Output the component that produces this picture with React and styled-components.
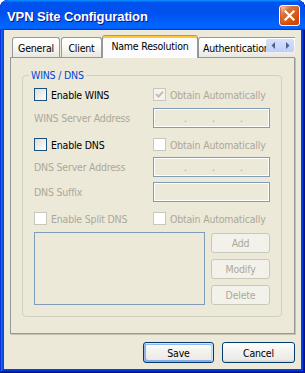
import React from "react";
import styled, { createGlobalStyle } from "styled-components";

const UI = `"DejaVu Sans Condensed", "Liberation Sans", sans-serif`;

const Global = createGlobalStyle`
  html, body { margin: 0; padding: 0; background: #ffffff; }
  * { box-sizing: border-box; }
`;

const Window = styled.div`
  width: 305px;
  height: 373px;
  display: flex;
  flex-direction: column;
  background: #0842dd;
  border-radius: 8px 8px 0 0;
  overflow: hidden;
  box-shadow: inset -1px -1px #00138c, inset 1px 1px #0831d9,
    inset -2px -2px #001ea0, inset 2px 2px #166aee,
    inset -3px -3px #003bda, inset 3px 3px #0855dd;
  font-family: ${UI};
  font-size: 10.5px;
  letter-spacing: -0.2px;
`;

const TitleBar = styled.div`
  height: 30px;
  flex-shrink: 0;
  display: flex;
  align-items: center;
  justify-content: space-between;
  padding: 0 5px 0 7px;
  border-radius: 8px 8px 0 0;
  background: linear-gradient(
    180deg,
    #0997ff,
    #0053ee 8%,
    #0050ee 40%,
    #0066ff 88%,
    #0066ff 93%,
    #005bff 95%,
    #003dd7 96%,
    #003dd7
  );
`;

const Title = styled.span`
  margin-top: 2px;
  color: #ffffff;
  font: bold 13px "Liberation Sans", Arial, sans-serif;
  text-shadow: 1px 1px #0f1089;
  letter-spacing: -0.1px;
`;

const CloseButton = styled.div`
  width: 21px;
  height: 21px;
  border: 1px solid #ffffff;
  border-radius: 3px;
  display: flex;
  align-items: center;
  justify-content: center;
  background: radial-gradient(
    circle at 90% 90%,
    #cc4600 0%,
    #dc6527 55%,
    #cd7546 68%,
    #ffccb2 90%,
    #ffffff 100%
  );
  box-shadow: inset 0 -1px 2px 1px #da4600;
`;

const Client = styled.div`
  flex: 1;
  margin: 0 4px 4px;
  background: #ece9d8;
  display: flex;
  flex-direction: column;
  padding: 5px 6px 6px;
`;

const TabStrip = styled.div`
  position: relative;
  z-index: 1;
  height: 23px;
  margin-bottom: -1px;
  display: flex;
  align-items: flex-end;
  padding-left: 2px;
  overflow: hidden;
`;

const Tab = styled.div`
  flex-shrink: 0;
  width: ${(p) => p.$w}px;
  height: ${(p) => (p.$active ? 23 : 20)}px;
  margin: 0 ${(p) => (p.$active ? 0 : 1)}px ${(p) => (p.$active ? 0 : 1)}px
    ${(p) => (p.$active ? -1 : 0)}px;
  border: 1px solid #919b9c;
  border-bottom: none;
  border-top-color: ${(p) => (p.$active ? "#e68b2c" : "#919b9c")};
  border-radius: 3px 3px 0 0;
  background: ${(p) =>
    p.$active
      ? "#fcfcfe"
      : "linear-gradient(180deg, #ffffff, #fcfcfb 35%, #f0efea 75%, #e7e6e0)"};
  box-shadow: ${(p) => (p.$active ? "inset 0 2px #ffc73c" : "none")};
  display: flex;
  align-items: center;
  justify-content: ${(p) => (p.$left ? "flex-start" : "center")};
  padding: ${(p) => (p.$active ? "0 0 2px" : p.$left ? "0 0 0 4px" : "0")};
  color: #000000;
  white-space: nowrap;
`;

const TabScroller = styled.div`
  position: absolute;
  right: 1px;
  top: 4px;
  width: 28px;
  height: 13px;
  display: flex;
  background: linear-gradient(180deg, #d6e1fd, #bccefa);
  border-radius: 2px;
`;

const ScrollHalf = styled.div`
  flex: 1;
  display: flex;
  align-items: center;
  justify-content: center;
`;

const Panel = styled.div`
  flex: 1;
  border: 1px solid #919b9c;
  background: #ece9d8;
  box-shadow: 1px 1px 0 #c5c2b2;
  padding: 10px 12px 0 11px;
  display: flex;
  flex-direction: column;
`;

const Group = styled.fieldset`
  margin: 0;
  border: 1px solid #d0d0bf;
  border-radius: 4px;
  padding: 0 11px 11px 11px;
  min-width: 0;
`;

const Legend = styled.legend`
  margin-left: -5px;
  padding: 0 2px;
  line-height: 14px;
  color: #0046d5;
`;

const Row = styled.div`
  display: flex;
  align-items: ${(p) => (p.$top ? "flex-start" : "center")};
  height: ${(p) => p.$h}px;
  margin-top: ${(p) => p.$mt}px;
`;

const LeftCell = styled.div`
  width: 119px;
  flex-shrink: 0;
  display: flex;
  align-items: center;
  color: ${(p) => (p.$disabled ? "#aca899" : "#000000")};
  white-space: nowrap;
`;

const RightCell = styled.div`
  width: 117px;
  display: flex;
  align-items: center;
  color: #aca899;
  white-space: nowrap;
`;

const Box = styled.span`
  width: 13px;
  height: 13px;
  flex-shrink: 0;
  margin-right: 4px;
  border: 1px solid ${(p) => (p.$disabled ? "#cac8bb" : "#1c5180")};
  background: ${(p) =>
    p.$disabled
      ? p.$checked
        ? "#f4f3ee"
        : "#ffffff"
      : "linear-gradient(135deg, #dcdcd7, #ffffff)"};
  display: flex;
  align-items: center;
  justify-content: center;
`;

const Field = styled.div`
  width: 117px;
  height: 20px;
  border: 1px solid #7f9db9;
  background: #ece9d8;
  box-shadow: inset 0 0 0 1px #ffffff;
  display: flex;
  align-items: center;
  padding-left: 1px;
  color: #aca899;
`;

const Segment = styled.span`
  width: ${(p) => p.$w}px;
  flex-shrink: 0;
`;

const Dot = styled.span`
  width: 3px;
  text-align: center;
  flex-shrink: 0;
`;

const ListBox = styled.div`
  width: 171px;
  height: 73px;
  flex-shrink: 0;
  border: 1px solid #7f9db9;
  background: #ece9d8;
`;

const SideButtons = styled.div`
  display: flex;
  flex-direction: column;
  gap: 6px;
  margin-left: 6px;
  padding-top: 1px;
`;

const SideButton = styled.div`
  width: 59px;
  height: 20px;
  border: 1px solid #c9c7ba;
  border-radius: 3px;
  background: #f3f2ea;
  color: #aca899;
  display: flex;
  align-items: center;
  justify-content: center;
`;

const Footer = styled.div`
  display: flex;
  justify-content: flex-end;
  gap: 8px;
  margin-top: 8px;
`;

const PushButton = styled.button`
  width: ${(p) => p.$w}px;
  height: 21px;
  padding: 0;
  font: 10.5px ${UI};
  letter-spacing: -0.2px;
  color: #000000;
  border: 1px solid #003c74;
  border-radius: 3px;
  background: linear-gradient(180deg, #ffffff, #f3f3ef 40%, #ecebe6 86%, #d6d0c5);
  box-shadow: ${(p) =>
    p.$default
      ? "inset -1px 1px #cee7ff, inset 1px 2px #98b8ea, inset -2px 2px #bcd4f6, inset 1px -1px #89ade4, inset 2px -2px #89ade4"
      : "none"};
`;

const Check = ({ color }) => (
  <svg width="9" height="9" viewBox="0 0 9 9">
    <polyline points="1,4 3.5,6.5 8,1.8" fill="none" stroke={color} strokeWidth="2" />
  </svg>
);

const CheckBox = ({ disabled, checked }) => (
  <Box $disabled={disabled} $checked={checked}>
    {checked && <Check color={disabled ? "#c2c0b2" : "#21a121"} />}
  </Box>
);

const IpField = () => (
  <Field>
    <Segment $w={29} />
    <Dot>.</Dot>
    <Segment $w={25} />
    <Dot>.</Dot>
    <Segment $w={25} />
    <Dot>.</Dot>
  </Field>
);

const Arrow = ({ dir }) => (
  <svg width="5" height="7" viewBox="0 0 5 7">
    <polygon
      points={dir === "left" ? "4,0 4,7 0.5,3.5" : "1,0 1,7 4.5,3.5"}
      fill="#4d6185"
    />
  </svg>
);

export default function App() {
  return (
    <>
      <Global />
      <Window>
        <TitleBar>
          <Title>VPN Site Configuration</Title>
          <CloseButton>
            <svg width="11" height="11" viewBox="0 0 11 11">
              <path d="M1.5 1.5 L9.5 9.5 M9.5 1.5 L1.5 9.5" stroke="#ffffff" strokeWidth="2.2" strokeLinecap="square" />
            </svg>
          </CloseButton>
        </TitleBar>
        <Client>
          <TabStrip>
            <Tab $w={48}>General</Tab>
            <Tab $w={41}>Client</Tab>
            <Tab $w={96} $active>
              Name Resolution
            </Tab>
            <Tab $w={100} $left>
              Authentication
            </Tab>
            <TabScroller>
              <ScrollHalf>
                <Arrow dir="left" />
              </ScrollHalf>
              <ScrollHalf>
                <Arrow dir="right" />
              </ScrollHalf>
            </TabScroller>
          </TabStrip>
          <Panel>
            <Group>
              <Legend>WINS / DNS</Legend>
              <Row $h={15} $mt={5}>
                <LeftCell>
                  <CheckBox />
                  Enable WINS
                </LeftCell>
                <RightCell>
                  <CheckBox disabled checked />
                  Obtain Automatically
                </RightCell>
              </Row>
              <Row $h={20} $mt={6}>
                <LeftCell $disabled>WINS Server Address</LeftCell>
                <IpField />
              </Row>
              <Row $h={15} $mt={9}>
                <LeftCell>
                  <CheckBox />
                  Enable DNS
                </LeftCell>
                <RightCell>
                  <CheckBox disabled />
                  Obtain Automatically
                </RightCell>
              </Row>
              <Row $h={20} $mt={5}>
                <LeftCell $disabled>DNS Server Address</LeftCell>
                <IpField />
              </Row>
              <Row $h={20} $mt={5}>
                <LeftCell $disabled>DNS Suffix</LeftCell>
                <Field />
              </Row>
              <Row $h={15} $mt={9}>
                <LeftCell $disabled>
                  <CheckBox disabled />
                  Enable Split DNS
                </LeftCell>
                <RightCell>
                  <CheckBox disabled />
                  Obtain Automatically
                </RightCell>
              </Row>
              <Row $h={73} $mt={6} $top>
                <ListBox />
                <SideButtons>
                  <SideButton>Add</SideButton>
                  <SideButton>Modify</SideButton>
                  <SideButton>Delete</SideButton>
                </SideButtons>
              </Row>
            </Group>
          </Panel>
          <Footer>
            <PushButton $w={71} $default>
              Save
            </PushButton>
            <PushButton $w={73}>Cancel</PushButton>
          </Footer>
        </Client>
      </Window>
    </>
  );
}
